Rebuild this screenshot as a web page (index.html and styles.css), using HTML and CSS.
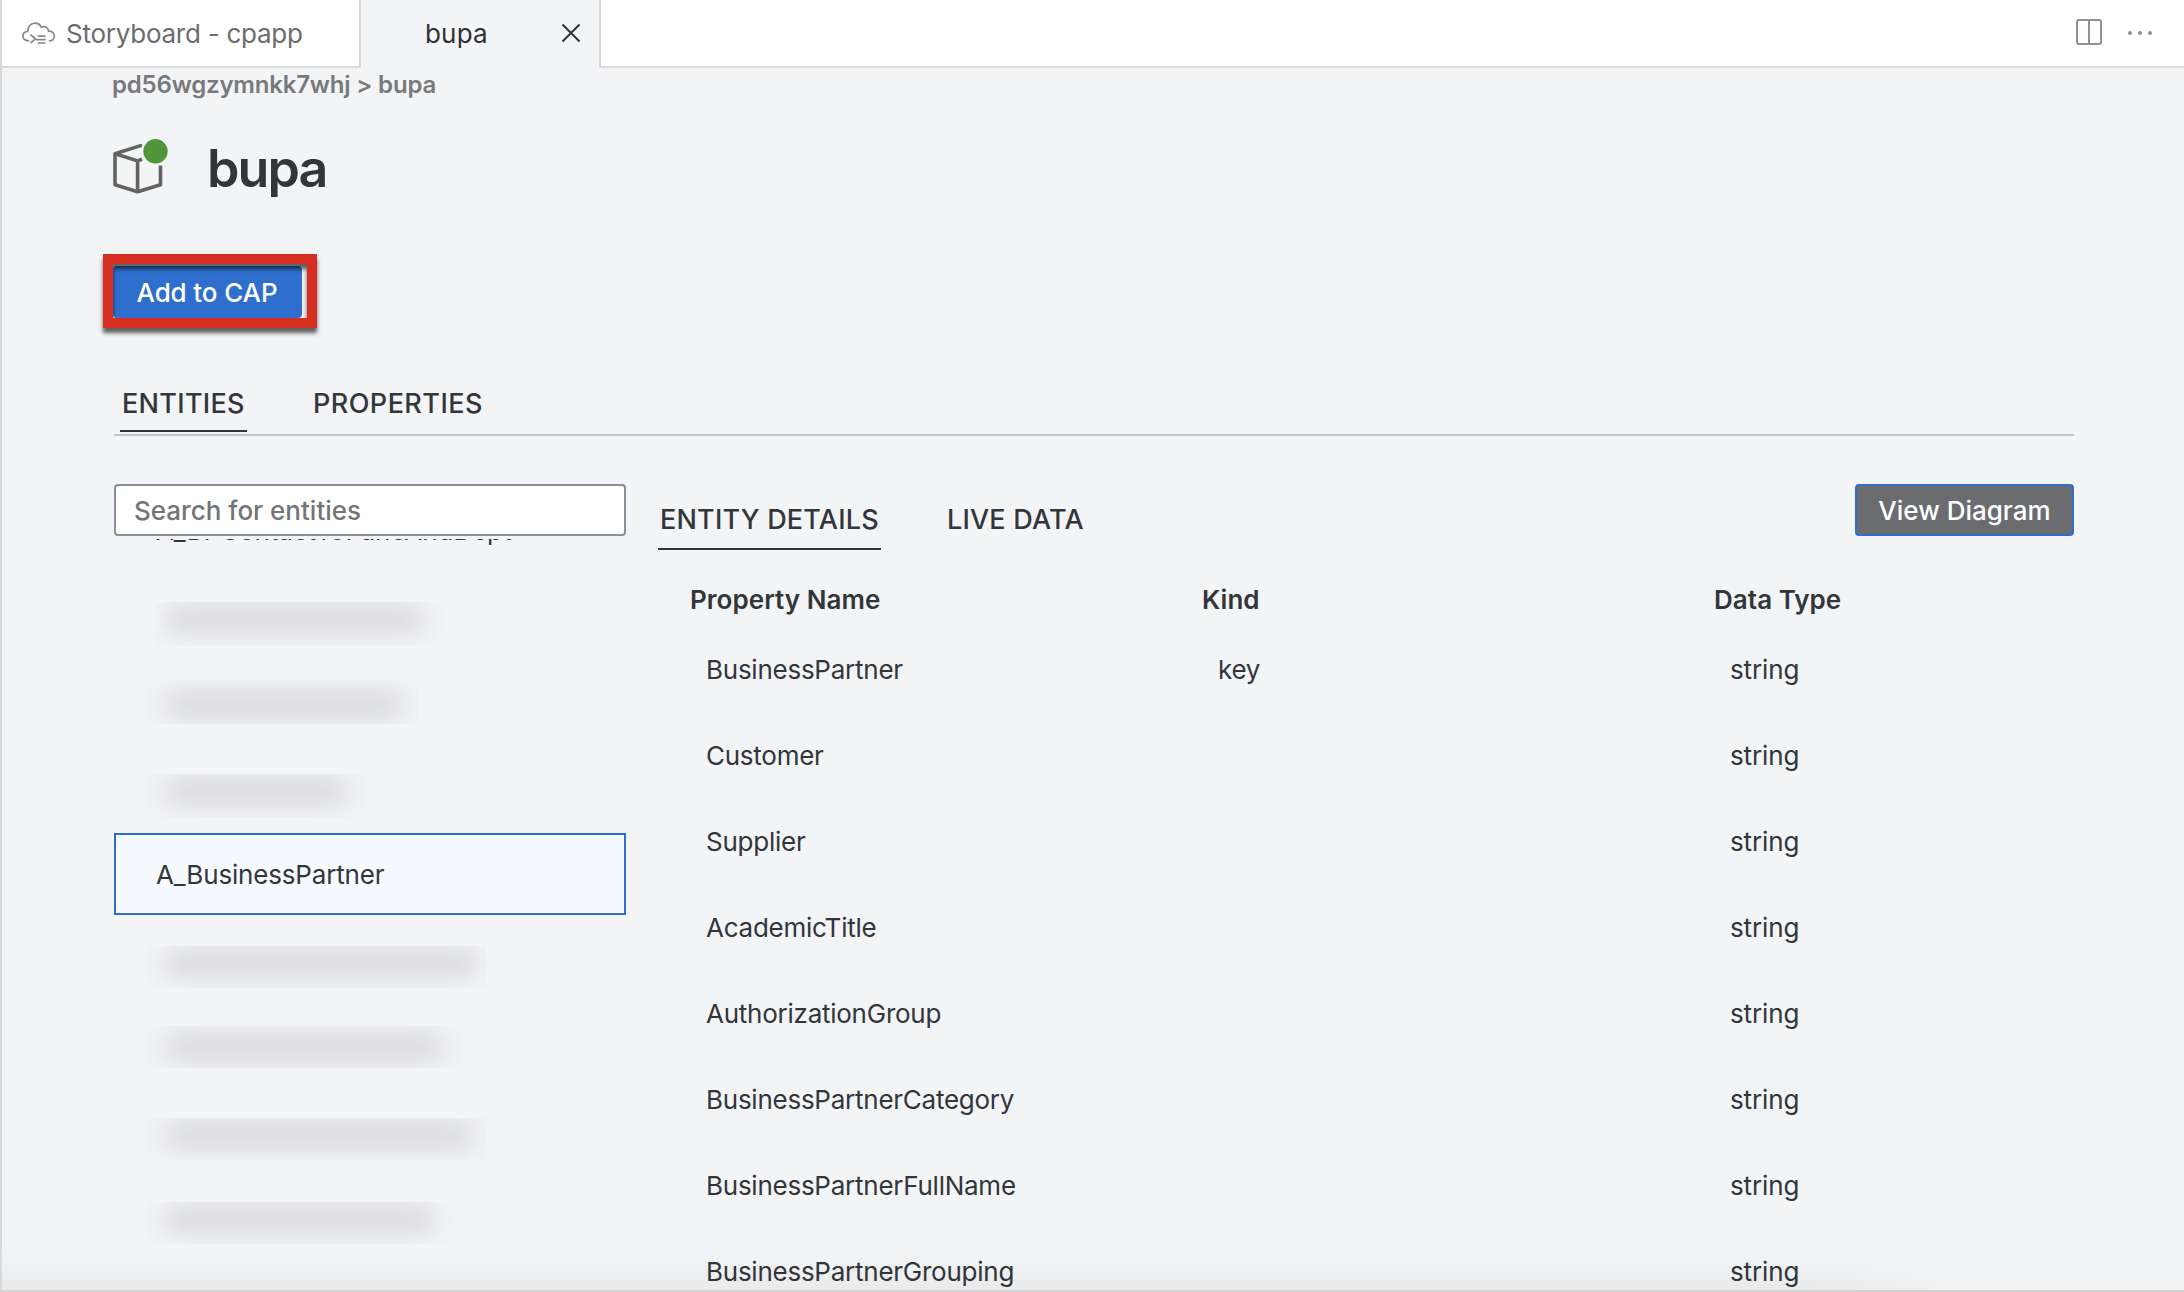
FILE: index.html
```html
<!DOCTYPE html>
<html lang="en">
<head>
<meta charset="utf-8">
<title>bupa</title>
<link rel="stylesheet" href="styles.css">
</head>
<body>
<div class="editor">
  <header class="tabbar">
    <div class="tab tab-inactive">
      <svg class="cloud" width="34" height="24" viewBox="0 0 34 24" fill="none" stroke="#8a8a8c" stroke-width="1.7" stroke-linecap="round" stroke-linejoin="round">
        <path d="M6.500 18.800C3 18.600 1 16.500 1 14C1 11.400 3 9.600 5.800 9.400C5.600 4.600 8.800 1.200 13 1.200C16 1.200 18.200 2.800 19.300 5.200C22.600 3.800 26.300 5.600 26.600 9.200C30 9.200 32.200 11.200 32.200 14C32.200 16.800 30.200 18.700 27.500 18.800"/>
        <path d="M9 13L13.500 16.800L9 20.600M16.500 14.200H23M14.500 17.600H23M16.500 21H23"/>
      </svg>
      <span class="tab-name storyboard">Storyboard - cpapp</span>
    </div>
    <div class="tab tab-active">
      <span class="tab-name bupa">bupa</span>
      <svg class="close" width="20" height="20" viewBox="0 0 20 20" stroke="#303136" stroke-width="2"><path d="M1.500 1.500L18.500 18.500M18.500 1.500L1.500 18.500"/></svg>
    </div>
    <div class="actions">
      <svg width="26" height="26" viewBox="0 0 26 26" fill="none" stroke="#8b929d" stroke-width="2"><rect x="1" y="1" width="24" height="24" rx="2"/><path d="M13 1V25"/></svg>
      <svg width="26" height="26" viewBox="0 0 26 26" fill="#8b929d"><circle cx="3" cy="14" r="2"/><circle cx="13" cy="14" r="2"/><circle cx="23" cy="14" r="2"/></svg>
    </div>
  </header>

  <main class="content">
    <div class="crumbs">pd56wgzymnkk7whj &gt; bupa</div>
    <div class="heading">
      <svg width="60" height="64" viewBox="0 0 60 64" fill="none" stroke="#636363" stroke-width="3.600" stroke-linejoin="round">
        <path d="M28.500 11.500V9.600L3 17.700V48.700L25.600 55.800L48.500 48.700V29.500M3 17.700L25.600 24.900V55.800M25.600 24.900L30 23.200"/>
        <circle cx="43.500" cy="15.300" r="14.200" fill="#f3f4f6" stroke="none"/>
        <circle cx="43.500" cy="15.300" r="12.200" fill="#51953a" stroke="none"/>
      </svg>
      <h1>bupa</h1>
    </div>

    <div class="cta">
      <button class="btn add">Add to CAP</button>
      <span class="callout"></span>
    </div>

    <nav class="sections">
      <a class="section current">ENTITIES</a>
      <a class="section">PROPERTIES</a>
    </nav>

    <div class="panels">
      <aside class="entities">
        <input class="search" type="text" placeholder="Search for entities">
        <div class="list">
          <div class="item">A_BPContactToFuncAndDept</div>
          <div class="item hidden-name n1"><span class="smudge"><i></i></span></div>
          <div class="item hidden-name n2"><span class="smudge"><i></i></span></div>
          <div class="item hidden-name n3"><span class="smudge"><i></i></span></div>
          <div class="item selected">A_BusinessPartner</div>
          <div class="item hidden-name n4"><span class="smudge"><i></i></span></div>
          <div class="item hidden-name n5"><span class="smudge"><i></i></span></div>
          <div class="item hidden-name n6"><span class="smudge"><i></i></span></div>
          <div class="item hidden-name n7"><span class="smudge"><i></i></span></div>
        </div>
      </aside>

      <section class="details">
        <div class="details-top">
          <nav class="views">
            <a class="view current">ENTITY DETAILS</a>
            <a class="view">LIVE DATA</a>
          </nav>
          <button class="btn diagram">View Diagram</button>
        </div>
        <div class="props">
          <div class="row head"><span>Property Name</span><span>Kind</span><span>Data Type</span></div>
          <div class="row"><span>BusinessPartner</span><span>key</span><span class="type">string</span></div>
          <div class="row"><span>Customer</span><span></span><span class="type">string</span></div>
          <div class="row"><span>Supplier</span><span></span><span class="type">string</span></div>
          <div class="row"><span>AcademicTitle</span><span></span><span class="type">string</span></div>
          <div class="row"><span>AuthorizationGroup</span><span></span><span class="type">string</span></div>
          <div class="row"><span>BusinessPartnerCategory</span><span></span><span class="type">string</span></div>
          <div class="row"><span>BusinessPartnerFullName</span><span></span><span class="type">string</span></div>
          <div class="row"><span>BusinessPartnerGrouping</span><span></span><span class="type">string</span></div>
        </div>
      </section>
    </div>
  </main>
  <div class="edge-shadow"></div>
</div>
</body>
</html>
```
FILE: styles.css
```css
* { box-sizing: border-box; }

body {
  margin: 0;
  background: #f3f4f6;
  color: #32363b;
  font: 26px/40px Inter, "Liberation Sans", sans-serif;
  overflow: hidden;
}

.editor {
  position: relative;
  display: flex;
  flex-direction: column;
  height: 1292px;
  border-left: 2px solid #d9d9d9;
  border-bottom: 2px solid #d3d3d4;
  overflow: hidden;
}

/* Editor tabs */
.tabbar { display: flex; flex: none; height: 68px; }
.tab { display: flex; align-items: flex-start; border-right: 2px solid #d9d9d9; line-height: 68px; }
.tab-inactive { width: 359px; padding-left: 20px; background: #fff; border-bottom: 2px solid #d9d9d9; color: #6b6c70; }
.tab-active { width: 240px; padding-left: 64px; }
.cloud { margin: 22px 10px 0 0; flex: none; }
.storyboard { letter-spacing: -0.25px; }
.bupa { width: 136px; letter-spacing: 0.2px; color: #303136; }
.close { margin-top: 23px; }
.actions {
  display: flex;
  flex: 1;
  justify-content: flex-end;
  gap: 25px;
  padding: 19px 31px 0 0;
  background: #fff;
  border-bottom: 2px solid #d9d9d9;
}

/* Service page */
.content { flex: 1; min-height: 0; display: flex; flex-direction: column; padding: 2px 110px 0 112px; }
.crumbs { margin-left: -2px; font-size: 24px; font-weight: 600; line-height: 30px; letter-spacing: -0.19px; color: #77797d; }
.heading { display: flex; gap: 35px; margin: 36px 0 0 -2px; height: 64px; }
h1 { margin: 0; font-size: 52px; font-weight: 600; line-height: 66px; letter-spacing: -1.9px; }

.btn { border: 0; border-radius: 4px; height: 52px; padding: 0; color: #fff; font: inherit; font-weight: 450; line-height: 53px; }
.cta { position: relative; margin: 66px 0 0 -1px; height: 52px; }
.add { display: block; width: 189px; padding-right: 1px; background: #2e6fce; letter-spacing: -0.12px; }
.callout {
  position: absolute;
  left: -10px;
  top: -12px;
  width: 214px;
  height: 74px;
  border: 10px solid #d62f21;
  box-shadow: 0 5px 4px rgba(0, 0, 0, .62), inset 0 5px 4px rgba(0, 0, 0, .62);
}

.sections { display: flex; gap: 64px; margin-top: 66px; padding: 0 6px 2px; height: 52px; border-bottom: 2px solid #c6c7ca; font-size: 27px; font-weight: 450; }
.section { height: 48px; padding: 0 2px; letter-spacing: 0.45px; }
.section.current { width: 127px; letter-spacing: 0.3px; }
.current { border-bottom: 2px solid #32363b; }

.panels { display: flex; gap: 32px; flex: 1; min-height: 0; margin-top: 48px; }

/* Entity list */
.entities { width: 512px; flex: none; display: flex; flex-direction: column; }
.search {
  height: 52px;
  flex: none;
  padding: 1px 18px 0;
  border: 2px solid #888f99;
  border-radius: 4px;
  background: #fff;
  font: inherit;
  font-weight: 450;
  letter-spacing: 0;
}
.search::placeholder { color: #757575; opacity: 1; }
.list { flex: 1; min-height: 0; margin-top: 3px; overflow: hidden; }
.item { height: 82px; margin-bottom: 4px; padding-left: 42px; line-height: 83px; letter-spacing: -0.17px; }
.item:first-child { margin-top: -50px; letter-spacing: -0.07px; }
.selected { padding-left: 40px; border: 2px solid #2e6fce; background: #f6faff; line-height: 79px; }

/* Names obscured in the list */
.hidden-name { display: flex; align-items: flex-start; padding-left: 32px; }
.smudge { display: block; width: 340px; height: 42px; margin-top: 27px; padding: 5px 0 0 19px; overflow: hidden; }
.smudge i { display: block; width: 306px; height: 25px; border-radius: 4px; background: #d5d6d8; filter: blur(13px); }
.n1 { padding-left: 42px; }
.n1 .smudge { width: 288px; height: 44px; padding-left: 10px; }
.n1 i { width: 256px; }
.n2 .smudge { width: 272px; height: 44px; margin-top: 19px; padding-top: 12px; }
.n2 i { width: 238px; }
.n3 .smudge { width: 272px; height: 44px; }
.n3 i { width: 182px; }
.n4 i { width: 312px; }
.n5 .smudge { margin-top: 21px; padding-top: 9px; }
.n5 i { width: 278px; }
.n6 i { width: 308px; }
.n7 .smudge { margin-top: 25px; }
.n7 i { width: 268px; }

/* Entity details */
.details { flex: 1; min-width: 0; }
.details-top { display: flex; justify-content: space-between; height: 66px; }
.views { display: flex; gap: 64px; padding-top: 16px; font-size: 27px; font-weight: 450; letter-spacing: 0.2px; }
.view { height: 50px; padding: 0 2px; }
.view.current { width: 223px; white-space: nowrap; }
.diagram { width: 219px; border: 2px solid #2e6fce; background: #6b6c70; line-height: 49px; letter-spacing: 0; }
.props { padding: 30px 0 0 32px; }
.row { display: grid; grid-template-columns: 512px 512px 1fr; padding-left: 16px; line-height: 86px; letter-spacing: -0.25px; }
.row .type { letter-spacing: -0.1px; }
.row.head { padding: 0 0 7px; font-weight: 600; line-height: 40px; letter-spacing: 0.04px; }

.edge-shadow {
  position: absolute;
  left: 0;
  right: 0;
  bottom: 0;
  height: 42px;
  background: linear-gradient(rgba(0, 0, 0, 0), rgba(0, 0, 0, .015) 45%, rgba(0, 0, 0, .04));
  -webkit-mask-image: linear-gradient(90deg, #000 1800px, transparent 2020px);
  mask-image: linear-gradient(90deg, #000 1800px, transparent 2020px);
}
```
